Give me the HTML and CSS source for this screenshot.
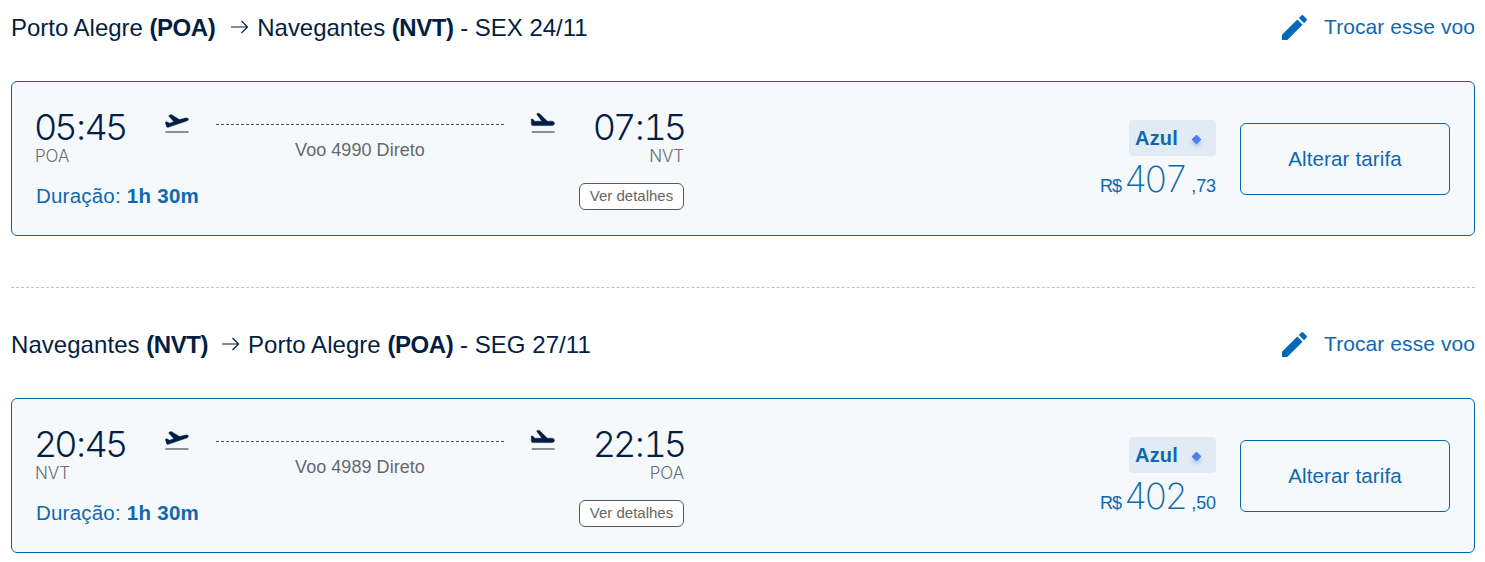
FILE: index.html
```
<!DOCTYPE html>
<html lang="pt-BR">
<head>
<meta charset="utf-8">
<title>Resumo dos voos</title>
<link rel="stylesheet" href="styles.css">
</head>
<body>
<svg width="0" height="0" class="defs">
  <symbol id="pencil" viewBox="3 3 18 18"><path d="M3 17.25V21h3.75L17.81 9.94l-3.75-3.75L3 17.25zM20.71 7.04c.39-.39.39-1.02 0-1.41l-2.34-2.34a.996.996 0 0 0-1.41 0l-1.83 1.83 3.75 3.75 1.83-1.83z"/></symbol>
  <symbol id="arrow" viewBox="0 0 19 14"><path d="M1 7h16.5M11.5 1l6 6-6 6" fill="none" stroke="currentColor" stroke-width="1.2"/></symbol>
  <symbol id="takeoff" viewBox="0 0 24 20"><path class="body" d="M.4 8.3 1.9 7.8 4.6 9.3 8.9 7.7 4 2.3Q3.5 1.6 4.3 1.2L6.2.5 14.4 5.6 20.8 4Q23 3.6 23.4 4.9 23.6 6.3 21.5 7.1L3.9 13.1Q2.3 13.6 1.6 12.7Z"/><path class="runway" d="M.5 17h23v2H.5z"/></symbol>
  <symbol id="landing" viewBox="0 0 24 20"><path class="body" d="M.3 5h1.4l2 2.2h7.2L5.9.5Q5.5-.6 6.6-.6h1.8l8 7.8h4.7q2.4.3 2.4 2.1t-2.1 2.3H2Q.3 11.6.3 9.4Z"/><path class="runway" d="M.8 17h22.7v2H.8z"/></symbol>
</svg>
<main class="trips">
  <section class="trip">
    <header class="trip-head">
      <h2 class="route"><span class="from">Porto Alegre <b>(POA)</b></span><svg class="arrow"><use href="#arrow"/></svg><span>Navegantes <b>(NVT)</b> - SEX 24/11</span></h2>
      <a class="change"><svg class="pencil"><use href="#pencil"/></svg><span>Trocar esse voo</span></a>
    </header>
    <article class="card">
      <div class="flight">
        <div class="leg">
          <div class="stop"><div class="time">05<i>:</i>45</div><div class="code">POA</div></div>
          <svg class="plane"><use href="#takeoff"/></svg>
          <div class="path"><div class="dash"></div><div class="number">Voo 4990 Direto</div></div>
          <svg class="plane"><use href="#landing"/></svg>
          <div class="stop end"><div class="time">07<i>:</i>15</div><div class="code">NVT</div></div>
        </div>
        <div class="meta"><div class="duration">Duração: <b>1h 30m</b></div><button class="details">Ver detalhes</button></div>
      </div>
      <div class="fare">
        <div class="brand"><b>Azul</b><i class="gem"></i></div>
        <div class="price"><span class="cur">R$</span><span class="whole">407</span><span class="cents">,73</span></div>
      </div>
      <button class="alter">Alterar tarifa</button>
    </article>
  </section>
  <section class="trip">
    <header class="trip-head">
      <h2 class="route"><span class="from">Navegantes <b>(NVT)</b></span><svg class="arrow"><use href="#arrow"/></svg><span>Porto Alegre <b>(POA)</b> - SEG 27/11</span></h2>
      <a class="change"><svg class="pencil"><use href="#pencil"/></svg><span>Trocar esse voo</span></a>
    </header>
    <article class="card">
      <div class="flight">
        <div class="leg">
          <div class="stop"><div class="time">20<i>:</i>45</div><div class="code">NVT</div></div>
          <svg class="plane"><use href="#takeoff"/></svg>
          <div class="path"><div class="dash"></div><div class="number">Voo 4989 Direto</div></div>
          <svg class="plane"><use href="#landing"/></svg>
          <div class="stop end"><div class="time">22<i>:</i>15</div><div class="code">POA</div></div>
        </div>
        <div class="meta"><div class="duration">Duração: <b>1h 30m</b></div><button class="details">Ver detalhes</button></div>
      </div>
      <div class="fare">
        <div class="brand"><b>Azul</b><i class="gem"></i></div>
        <div class="price"><span class="cur">R$</span><span class="whole">402</span><span class="cents">,50</span></div>
      </div>
      <button class="alter">Alterar tarifa</button>
    </article>
  </section>
</main>
</body>
</html>
```
FILE: styles.css
```
* { box-sizing: border-box; }
body { margin: 0; background: #fff; color: #041e43; font-family: "Liberation Sans", Arial, sans-serif; overflow: hidden; }
button { font-family: inherit; padding: 0; }
svg { display: block; flex: none; fill: currentColor; overflow: visible; }
symbol { overflow: visible; }
.defs { position: absolute; }
.trips { padding: 0 10px 0 11px; }
.trip { height: 288px; border-bottom: 1px dashed #bfc1c3; }
.trip + .trip { height: 274px; padding-top: 29px; border: 0; }
.trip-head { display: flex; justify-content: space-between; height: 81px; padding-top: 13px; }
.route { display: flex; margin: 0; font-size: 24px; line-height: 30px; font-weight: 400; letter-spacing: -.02px; white-space: nowrap; }
.route b { letter-spacing: -.45px; }
.arrow { width: 19px; height: 14px; margin: 7px 8px 0 15px; }
.trip + .trip .arrow { margin: 7px 8px 0 13px; }
.trip + .trip .route { letter-spacing: .05px; }
.change { display: flex; color: #0f68ae; font-size: 21px; line-height: 28px; letter-spacing: .08px; white-space: nowrap; }
.pencil { width: 25px; height: 25px; margin: 2px 17px 0 0; color: #0069b8; }
.card { display: flex; height: 155px; padding: 0 24px; border: 1px solid #0069a5; border-radius: 6px; background: #f5f9fc; }
.flight { width: 648px; padding-top: 26px; }
.leg { display: flex; height: 75px; }
.stop { width: 129px; }
.end { width: 128px; text-align: right; }
.time { height: 38px; margin-left: -2px; font: 300 36px/38px Inter, sans-serif; font-variant-numeric: tabular-nums; letter-spacing: -3px; }
.time i { display: inline-block; width: 10px; font-style: normal; text-align: center; }
.end .time { margin: 0 -1px 0 0; }
.code { font: 300 17px/20px Inter, sans-serif; color: #6b6d70; letter-spacing: -.1px; margin-left: -1px; }
.end .code { margin: 0 -1px 0 0; }
.plane { width: 24px; height: 20px; margin-top: 6px; color: #001d42; }
.body { stroke: currentColor; stroke-width: .5; }
.runway { fill: #868e9b; }
.path { width: 342px; padding: 16px 27px 0; }
.dash { height: 1px; background: repeating-linear-gradient(90deg, #54585d 0 3px, transparent 3px 5px); }
.number { margin-top: 15px; font-size: 18px; line-height: 20px; text-align: center; color: #66686a; letter-spacing: .05px; white-space: nowrap; }
.meta { display: flex; justify-content: space-between; }
.duration { font-size: 20.5px; line-height: 25px; color: #0f68ae; letter-spacing: .2px; }
.duration b { letter-spacing: .3px; }
.details { width: 105px; height: 27px; border: 1px solid #58595b; border-radius: 6px; background: #fff; color: #666; font-size: 15px; line-height: 22px; padding-bottom: 2px; }
.fare { display: flex; flex-direction: column; align-items: flex-end; width: 140px; margin-left: auto; padding-top: 38px; color: #0f68ae; }
.brand { display: flex; align-items: center; width: 87px; height: 36px; padding-left: 6px; border-radius: 4px; background: #e2ebf3; font-size: 20px; letter-spacing: .2px; }
.gem { width: 7px; height: 7px; margin: 2px 0 0 15px; border-radius: 1px; background: #4d7eea; box-shadow: 2px 2px 4px #6f99ed80; transform: rotate(45deg); }
.price { display: flex; align-items: baseline; height: 48px; line-height: 46px; white-space: nowrap; }
.cur { font-size: 18px; letter-spacing: -1.1px; }
.whole { margin-left: 3px; font: 200 36px/46px Inter, sans-serif; font-variant-numeric: tabular-nums; letter-spacing: -2.8px; }
.cents { margin-left: 6px; font-size: 18px; letter-spacing: -.1px; }
.alter { width: 210px; height: 72px; margin: 41px 0 0 24px; border: 1px solid #0069a5; border-radius: 6px; background: transparent; color: #0f68ae; font-size: 20.5px; letter-spacing: .15px; }
```
